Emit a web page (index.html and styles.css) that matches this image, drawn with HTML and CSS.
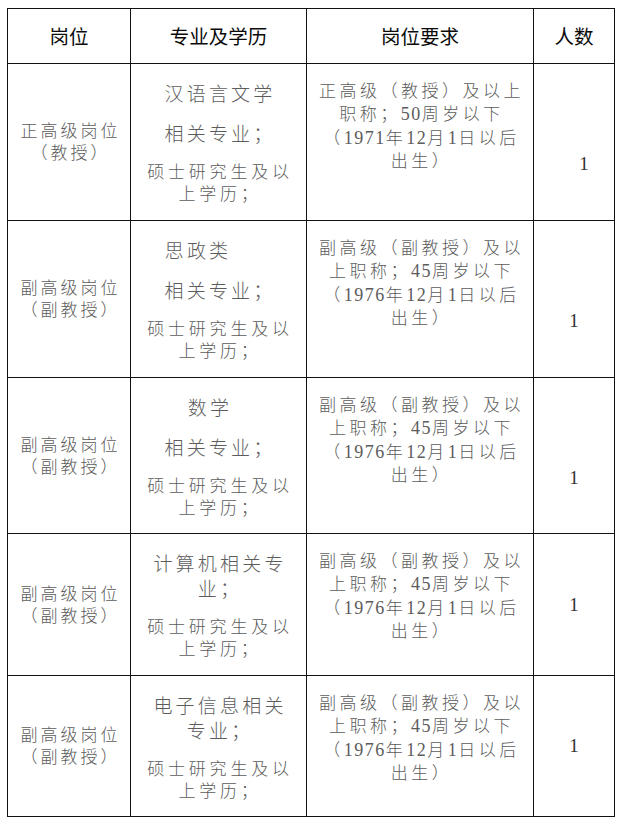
FILE: index.html
```html
<!DOCTYPE html>
<html lang="zh-CN">
<head>
<meta charset="utf-8">
<title>岗位需求表</title>
<link rel="stylesheet" href="styles.css">
</head>
<body>
<table class="jobs">
  <colgroup>
    <col class="c-post">
    <col class="c-major">
    <col class="c-req">
    <col class="c-num">
  </colgroup>
  <thead>
    <tr class="head">
      <th>岗位</th>
      <th>专业及学历</th>
      <th>岗位要求</th>
      <th>人数</th>
    </tr>
  </thead>
  <tbody>
    <tr class="r-tall">
      <td class="post">正高级岗位<br>（教授）</td>
      <td class="major">
        <p class="big">汉语言文学</p>
        <p class="big">相关专业；</p>
        <p class="small">硕士研究生及以<br>上学历；</p>
      </td>
      <td class="req">正高级（教授）及以上<br>职称；<span class="dg">50</span>周岁以下<br>（<span class="dg">1971</span>年<span class="dg">12</span>月<span class="dg">1</span>日以后<br>出生）</td>
      <td class="num low shift">1</td>
    </tr>
    <tr class="r-tall">
      <td class="post">副高级岗位<br>（副教授）</td>
      <td class="major">
        <p class="big left3">思政类</p>
        <p class="big">相关专业；</p>
        <p class="small">硕士研究生及以<br>上学历；</p>
      </td>
      <td class="req">副高级（副教授）及以<br>上职称；<span class="dg">45</span>周岁以下<br>（<span class="dg">1976</span>年<span class="dg">12</span>月<span class="dg">1</span>日以后<br>出生）</td>
      <td class="num low">1</td>
    </tr>
    <tr class="r-tall3">
      <td class="post">副高级岗位<br>（副教授）</td>
      <td class="major">
        <p class="big left2">数学</p>
        <p class="big">相关专业；</p>
        <p class="small">硕士研究生及以<br>上学历；</p>
      </td>
      <td class="req">副高级（副教授）及以<br>上职称；<span class="dg">45</span>周岁以下<br>（<span class="dg">1976</span>年<span class="dg">12</span>月<span class="dg">1</span>日以后<br>出生）</td>
      <td class="num low">1</td>
    </tr>
    <tr class="r-short">
      <td class="post">副高级岗位<br>（副教授）</td>
      <td class="major">
        <p class="big">计算机相关专<br>业；</p>
        <p class="small">硕士研究生及以<br>上学历；</p>
      </td>
      <td class="req">副高级（副教授）及以<br>上职称；<span class="dg">45</span>周岁以下<br>（<span class="dg">1976</span>年<span class="dg">12</span>月<span class="dg">1</span>日以后<br>出生）</td>
      <td class="num">1</td>
    </tr>
    <tr class="r-short5">
      <td class="post">副高级岗位<br>（副教授）</td>
      <td class="major">
        <p class="big">电子信息相关<br>专业；</p>
        <p class="small">硕士研究生及以<br>上学历；</p>
      </td>
      <td class="req">副高级（副教授）及以<br>上职称；<span class="dg">45</span>周岁以下<br>（<span class="dg">1976</span>年<span class="dg">12</span>月<span class="dg">1</span>日以后<br>出生）</td>
      <td class="num">1</td>
    </tr>
  </tbody>
</table>
</body>
</html>
```

FILE: styles.css
```css
html, body {
  margin: 0;
  padding: 0;
  background: #ffffff;
}

body {
  padding: 8px 0 0 7px;
}

.jobs {
  border-collapse: collapse;
  table-layout: fixed;
  width: 607px;
  font-family: "Liberation Serif", "Noto Sans CJK SC", serif;
  color: #5c5c5c;
}

.c-post { width: 123px; }
.c-major { width: 176px; }
.c-req { width: 227px; }
.c-num { width: 81px; }

.jobs th,
.jobs td {
  border: 1px solid #111;
  padding: 0;
  text-align: center;
}

.head { height: 55px; }
.r-tall { height: 157px; }
.r-tall3 { height: 156px; }
.r-short { height: 142px; }
.r-short5 { height: 141px; }

.jobs th {
  font-family: "Noto Sans CJK SC", sans-serif;
  font-weight: 400;
  font-size: 19.5px;
  color: #0a0a0a;
  vertical-align: middle;
  padding-bottom: 2px;
}

.post {
  font-family: "Noto Sans CJK SC", sans-serif;
  font-weight: 300;
  font-size: 17px;
  letter-spacing: 3px;
  line-height: 22px;
  vertical-align: middle;
  padding-left: 3px !important;
  padding-bottom: 2px !important;
}

.major {
  vertical-align: middle;
  font-family: "Noto Sans CJK SC", sans-serif;
  font-weight: 300;
  white-space: nowrap;
  padding-left: 3px !important;
}

.major p {
  margin: 0;
}

.major p + p {
  margin-top: 15px;
}

.major .big {
  font-size: 19px;
  letter-spacing: 3.2px;
  line-height: 25px;
}

.major .small {
  font-size: 17px;
  letter-spacing: 3.8px;
  line-height: 22px;
}

.major .left3 { padding-right: 44px; }
.major .left2 { padding-right: 20px; }

.req {
  vertical-align: top;
  font-weight: 300;
  font-size: 17px;
  letter-spacing: 3.5px;
  line-height: 23.3px;
  white-space: nowrap;
  padding-top: 16px !important;
  padding-left: 3px !important;
}

.req .dg {
  font-size: 18px;
  letter-spacing: 1.5px;
}

.num {
  vertical-align: middle;
  font-family: "Liberation Serif", serif;
  font-size: 19px;
  color: #333;
}

.num.low { padding-top: 44px !important; }
.num.shift { padding-left: 20px !important; }
```
